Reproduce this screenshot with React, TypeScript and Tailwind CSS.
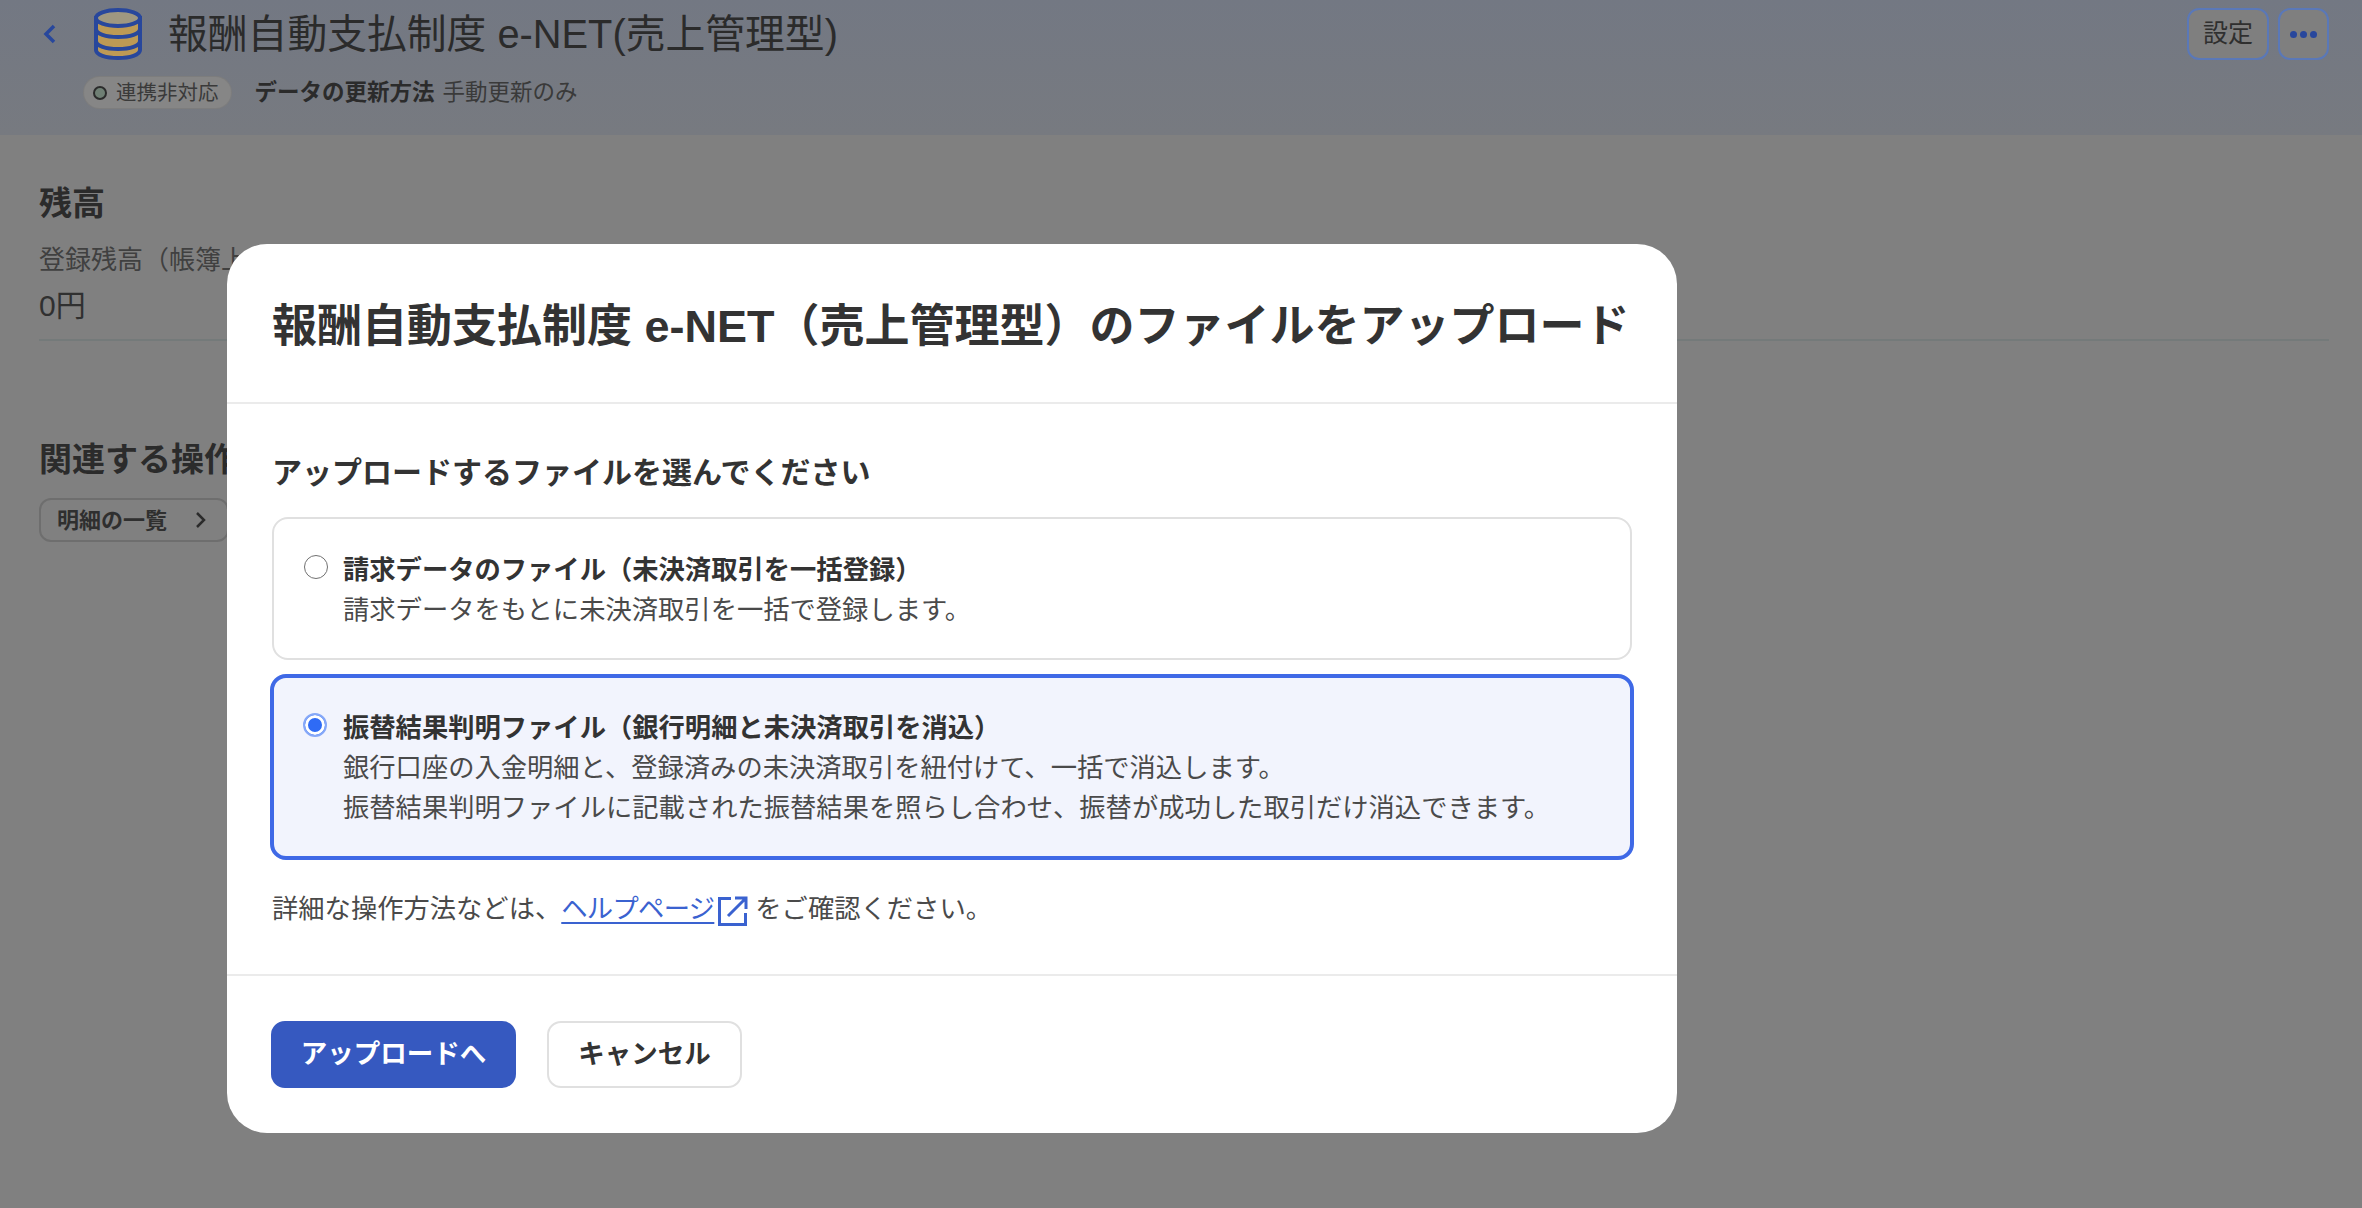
const font = { fontFamily: '"Liberation Sans", "Noto Sans CJK JP", sans-serif' }

const DatabaseIcon = () => (
  <svg width="50" height="52" viewBox="0 0 50 52" className="shrink-0">
    <path d="M3 10v32c0 5 10 8 22 8s22-3 22-8V10z" fill="#bd9a55" stroke="#28479c" strokeWidth="4" />
    <ellipse cx="25" cy="10" rx="22" ry="8" fill="#9e9781" stroke="#28479c" strokeWidth="4" />
    <path d="M3 21c0 5 10 8 22 8s22-3 22-8M3 33c0 5 10 8 22 8s22-3 22-8" fill="none" stroke="#28479c" strokeWidth="4" />
  </svg>
)

const ExternalIcon = () => (
  <svg width="30" height="30" viewBox="0 0 30 30" fill="none" stroke="#3a62d0" strokeWidth="3" className="ml-1 mr-[7px] mt-1 inline-block shrink-0">
    <path d="M13 2.5H1.5v26h26V17" />
    <path d="M10 20 27 3M17 2h11v11" />
  </svg>
)

const radio =
  'mr-[17px] size-[24px] shrink-0 appearance-none rounded-full border-[1.5px] border-[#707070] bg-white checked:border-2 checked:border-[#86a8f8] checked:bg-[#2f6bf5] checked:shadow-[inset_0_0_0_3px_white]'

export default function App() {
  return (
    <div className="relative h-[1208px] w-[2362px] overflow-hidden bg-[#808080] text-[#2b2b2b]" style={font}>
      {/* Page header */}
      <header className="h-[135px] bg-gradient-to-b from-[#737883] to-[#777a80] pl-[42px] pr-[33px]">
        <div className="flex items-start justify-between pt-2">
          <div className="flex items-center">
            <svg width="16" height="24" viewBox="0 0 16 24" fill="none" stroke="#28479c" strokeWidth="3.5" className="mr-[35px]">
              <path d="M12 4 4 12l8 8" />
            </svg>
            <DatabaseIcon />
            <h1 className="ml-[25px] text-[39.8px] leading-[52px]">報酬自動支払制度 e-NET(売上管理型)</h1>
          </div>
          <div className="flex gap-[9px]">
            <button className="flex h-[52px] w-[82px] items-center justify-center rounded-xl border-[2.5px] border-[#5a78b8] bg-[#7f7f7f] text-[25px] text-[#2f2f2f]">
              設定
            </button>
            <button className="flex h-[52px] w-[51px] items-center justify-center gap-[3px] rounded-xl border-[2.5px] border-[#5a78b8] bg-[#7f7f7f]">
              <span className="size-[7px] rounded-full bg-[#28479c]" />
              <span className="size-[7px] rounded-full bg-[#28479c]" />
              <span className="size-[7px] rounded-full bg-[#28479c]" />
            </button>
          </div>
        </div>
        <div className="ml-[42px] mt-[16px] flex items-center">
          <span className="flex h-[31px] items-center rounded-full bg-[#868686] pl-[9px] pr-3 text-[20.5px] text-[#3a3a3a] shadow-[0_0_0_1px_#7d7d7d]">
            <span className="mr-[9px] size-[14px] rounded-full border-2 border-[#2b2b2b] bg-[#6f7f74]" />
            連携非対応
          </span>
          <span className="ml-6 text-[22.5px] font-bold">データの更新方法</span>
          <span className="ml-2 text-[22.5px] text-[#3a3a3a]">手動更新のみ</span>
        </div>
      </header>

      {/* Page body, behind the dialog */}
      <main className="pl-[39px] pr-[33px]">
        <h2 className="mt-[46px] text-[33px] font-bold leading-[46px]">残高</h2>
        <p className="mt-[14px] text-[26px] leading-[38px] text-[#404040]">登録残高（帳簿上</p>
        <p className="mt-[8px] text-[30px] leading-[38px] text-[#303030]">0円</p>
        <div className="mt-[14px] h-0.5 bg-[#747a7a]" />
        <h2 className="mt-[96px] text-[33px] font-bold leading-[46px]">関連する操作</h2>
        <button className="mt-[15px] flex h-[44px] w-[190px] items-center rounded-xl border-2 border-[#6e6e6e] pl-4 text-[22px] font-bold text-[#2f2f2f]">
          明細の一覧
          <svg width="14" height="20" viewBox="0 0 14 20" fill="none" stroke="#2b2b2b" strokeWidth="2.5" className="ml-[27px]">
            <path d="m3 3 7 7-7 7" />
          </svg>
        </button>
      </main>

      {/* Upload dialog */}
      <div className="absolute left-[227px] top-[244px] flex h-[889px] w-[1450px] flex-col rounded-[40px] bg-white text-[#333333]">
        <div className="flex h-[160px] items-center border-b-2 border-[#ebebeb] pl-[45px] pt-[8px]">
          <h2 className="whitespace-nowrap text-[45px] font-bold">報酬自動支払制度 e-NET（売上管理型）のファイルをアップロード</h2>
        </div>
        <div className="flex-1 px-[45px]">
          <p className="mt-[47px] text-[30px] font-bold leading-[44px]">アップロードするファイルを選んでください</p>

          <label className="mt-[22px] flex h-[143px] rounded-2xl border-2 border-[#e0e0e0] pl-[30px] pt-[31px]">
            <input type="radio" name="file" className={`${radio} mt-[5px]`} />
            <span className="-ml-0.5 text-[26.3px] leading-[40px]">
              <b className="block">請求データのファイル（未決済取引を一括登録）</b>
              <span className="block text-[#4a4a4a]">請求データをもとに未決済取引を一括で登録します。</span>
            </span>
          </label>

          <label className="-mx-0.5 mt-[14px] flex h-[186px] rounded-2xl border-4 border-[#3f69e6] bg-[#f2f4fd] pl-[29px] pt-[30px]">
            <input type="radio" name="file" defaultChecked className={`${radio} mt-[5px]`} />
            <span className="-ml-px text-[26.3px] leading-[40px]">
              <b className="block">振替結果判明ファイル（銀行明細と未決済取引を消込）</b>
              <span className="block text-[#4a4a4a]">銀行口座の入金明細と、登録済みの未決済取引を紐付けて、一括で消込します。</span>
              <span className="block text-[#4a4a4a]">振替結果判明ファイルに記載された振替結果を照らし合わせ、振替が成功した取引だけ消込できます。</span>
            </span>
          </label>

          <p className="mt-[29px] flex items-center text-[26.3px] leading-[40px] text-[#4a4a4a]">
            詳細な操作方法などは、
            <a className="tracking-[-0.7px] text-[#3a62d0] underline underline-offset-4">ヘルプページ</a>
            <ExternalIcon />
            をご確認ください。
          </p>
        </div>
        <div className="flex h-[159px] gap-[31px] border-t-2 border-[#ebebeb] pl-11 pt-[45px]">
          <button className="h-[67px] w-[245px] rounded-[14px] bg-[#3659c0] text-[26.5px] font-bold text-white">アップロードへ</button>
          <button className="h-[67px] w-[195px] rounded-[14px] border-2 border-[#e0e0e0] text-[26.5px] font-bold">キャンセル</button>
        </div>
      </div>
    </div>
  )
}
